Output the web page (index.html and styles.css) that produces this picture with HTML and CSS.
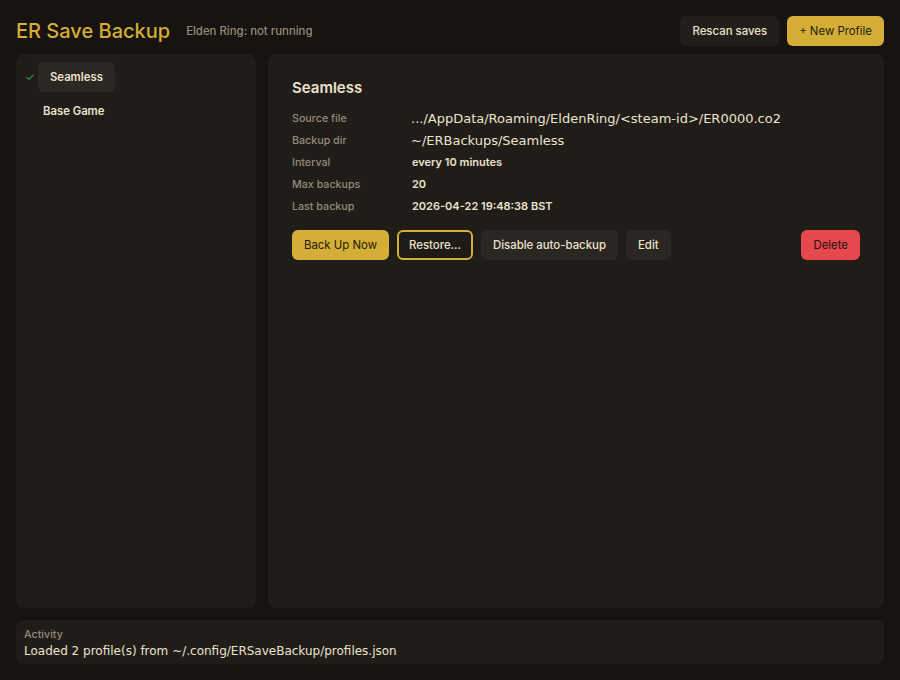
FILE: index.html
```html
<!DOCTYPE html>
<html lang="en">
<head>
  <meta charset="UTF-8" />
  <meta name="viewport" content="width=device-width, initial-scale=1.0"/>
  <title>ER Save Backup</title>
  <link rel="stylesheet" href="styles.css">
</head>
<body>

<div class="app">
  <header class="topbar">
    <h1 class="title">ER Save Backup</h1>
    <span class="status">Elden Ring: not running</span>
    <div class="top-actions">
      <button class="btn">Rescan saves</button>
      <button class="btn primary">+ New Profile</button>
    </div>
  </header>

  <main class="main">
    <aside class="sidebar">
      <div class="profile active">
        <span class="check">&#10003;</span>
        <span class="pill">Seamless</span>
      </div>
      <div class="profile">
        <span class="pill">Base Game</span>
      </div>
    </aside>

    <section class="detail">
      <h2 class="detail-title">Seamless</h2>
      <dl class="fields">
        <dt>Source file</dt>
        <dd class="path">.../AppData/Roaming/EldenRing/&lt;steam-id&gt;/ER0000.co2</dd>
        <dt>Backup dir</dt>
        <dd class="path">~/ERBackups/Seamless</dd>
        <dt>Interval</dt>
        <dd>every 10 minutes</dd>
        <dt>Max backups</dt>
        <dd>20</dd>
        <dt>Last backup</dt>
        <dd>2026-04-22 19:48:38 BST</dd>
      </dl>
      <div class="actions">
        <button class="btn primary">Back Up Now</button>
        <button class="btn outline">Restore...</button>
        <button class="btn soft">Disable auto-backup</button>
        <button class="btn soft">Edit</button>
        <button class="btn danger">Delete</button>
      </div>
    </section>
  </main>

  <footer class="activity">
    <div class="activity-label">Activity</div>
    <div class="activity-msg">Loaded 2 profile(s) from ~/.config/ERSaveBackup/profiles.json</div>
  </footer>
</div>

</body>
</html>
```

FILE: styles.css
```css
body {
  margin: 0;
  background: #161311;
  font-family: Inter, 'Noto Sans', sans-serif;
  color: #ece2cc;
}
.app {
  height: 680px;
  box-sizing: border-box;
  padding: 16px;
  display: flex;
  flex-direction: column;
}
.topbar {
  display: flex;
  align-items: center;
  height: 30px;
  margin-bottom: 8px;
}
.title {
  margin: 0;
  font-size: 20px;
  font-weight: 500;
  color: #d4ae36;
}
.status {
  margin-left: 16px;
  font-size: 11.4px;
  font-weight: 500;
  color: #968b79;
}
.top-actions {
  margin-left: auto;
  display: flex;
  gap: 8px;
}
.btn {
  height: 30px;
  padding: 0 12px;
  border: none;
  border-radius: 6px;
  background: #221f1b;
  color: #ece2cc;
  font-family: Inter, sans-serif;
  font-size: 11.4px;
  font-weight: 500;
  cursor: pointer;
}
.btn.primary {
  background: #d4ae36;
  color: #231d10;
  font-weight: 400;
}
.btn.outline {
  background: #1f1c18;
  border: 2px solid #d4ae36;
  padding: 0 10px;
}
.btn.soft {
  background: #2a2621;
}
.btn.danger {
  margin-left: auto;
  background: #e5484d;
  color: #2a1212;
  font-weight: 400;
}
.main {
  flex: 1;
  display: flex;
  gap: 12px;
  min-height: 0;
}
.sidebar {
  width: 240px;
  background: #201d19;
  border-radius: 8px;
  padding: 8px 0 0 9px;
  box-sizing: border-box;
  display: flex;
  flex-direction: column;
  gap: 4px;
}
.profile {
  display: flex;
  align-items: center;
  height: 30px;
}
.check {
  width: 8px;
  margin-right: 5px;
  font-size: 11px;
  color: #2fa84f;
}
.pill {
  font-size: 11.3px;
  font-weight: 600;
  padding: 0 12px;
  line-height: 30px;
  border-radius: 6px;
}
.profile.active .pill {
  background: #2b2722;
}
.profile:not(.active) .pill {
  padding-left: 18px;
}
.detail {
  flex: 1;
  background: #201d19;
  border-radius: 8px;
  padding: 24px 24px;
}
.detail-title {
  margin: 0 0 9px;
  font-size: 15px;
  font-weight: 600;
  line-height: 20px;
}
.fields {
  display: grid;
  grid-template-columns: 120px 1fr;
  grid-auto-rows: 22px;
  align-items: center;
  margin: 0;
}
.fields dt {
  font-size: 10.7px;
  font-weight: 500;
  color: #968b79;
}
.fields dd {
  margin: 0;
  font-size: 11px;
  font-weight: 600;
}
.fields dd.path {
  font-family: 'DejaVu Sans', sans-serif;
  font-size: 13px;
  font-weight: 400;
  margin-left: -1px;
}
.actions {
  display: flex;
  gap: 8px;
  margin-top: 13px;
}
.activity {
  margin-top: 12px;
  background: #201d19;
  border-radius: 8px;
  padding: 8px 8px 4px;
}
.activity-label {
  font-size: 10.7px;
  font-weight: 500;
  color: #968b79;
  line-height: 14px;
}
.activity-msg {
  font-family: 'DejaVu Sans', sans-serif;
  font-size: 12px;
  line-height: 18px;
}
```
